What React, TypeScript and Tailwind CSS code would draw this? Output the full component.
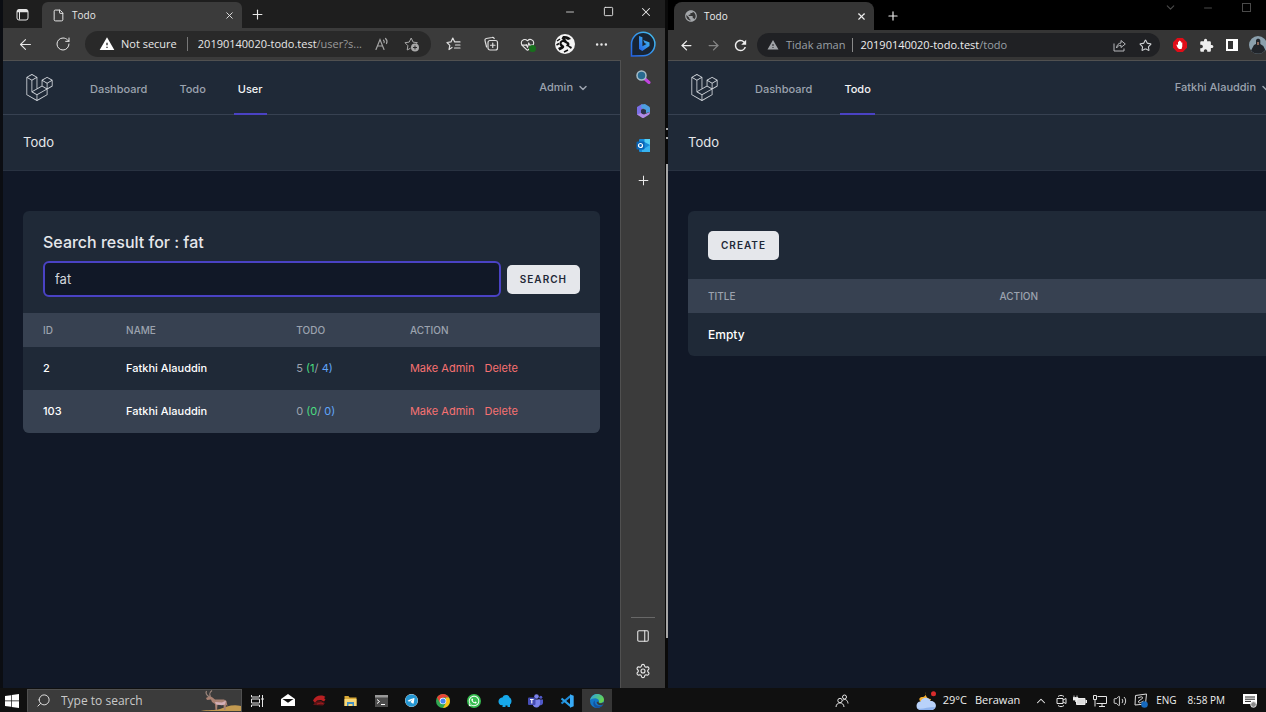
import type { ReactNode } from "react";
import {
  ArrowLeft,
  ArrowRight,
  ChevronDown,
  ChevronUp,
  File,
  HeartPulse,
  Minus,
  MoreHorizontal,
  PanelRight,
  Plus,
  RotateCw,
  Search,
  Settings,
  Square,
  Star,
  Volume2,
  X,
} from "lucide-react";
import { SiLaravel } from "react-icons/si";
import { FaTelegram, FaWhatsapp } from "react-icons/fa6";
import { MdExtension, MdPublic, MdRefresh, MdWarning } from "react-icons/md";

const uiFont = "font-['Open_Sans','Noto_Sans',sans-serif]";
const pageFont = "font-[Inter,'Liberation_Sans',sans-serif]";

function IconButton({ label, className = "", children }: { label: string; className?: string; children: ReactNode }) {
  return (
    <button type="button" aria-label={label} className={`flex shrink-0 items-center justify-center ${className}`}>
      {children}
    </button>
  );
}

/* ---------- Drawings ---------- */

function TabActionsIcon() {
  return (
    <svg width="13" height="13" viewBox="0 0 13 13" fill="none" stroke="#e5e5e5">
      <rect x="1" y="1.5" width="11" height="10.5" rx="2" />
      <path d="M1 3.5h11M1.5 2.5h10" strokeWidth="1.6" />
      <path d="M3.5 4v7.5" />
    </svg>
  );
}

function ReadAloudIcon() {
  return (
    <svg width="14" height="14" viewBox="0 0 14 14" fill="none" stroke="#a5a5a5" strokeLinecap="round" strokeWidth="1.2">
      <path d="M1 12.5 5 2.5l4 10M2.4 9h5.2M8.5 3.2c.8.7.9 1.6.6 2.4M10.5 1.5c1.6 1.400 1.900 3.200 1 5" />
    </svg>
  );
}

function StarAddIcon() {
  return (
    <svg width="16" height="16" viewBox="0 0 16 16" fill="none" stroke="#a8a8a8" strokeLinejoin="round">
      <path d="M6.500 12.200 3.200 14l.7-4.300L1 6.700l4.200-.6L7.200 2l1.900 4.100 4.300.6-1 1" />
      <circle cx="11" cy="11.500" r="4" fill="#a8a8a8" stroke="none" />
      <path d="M9 11.500h4M11 9.500v4" stroke="#2b2b2b" />
    </svg>
  );
}

function FavoritesIcon() {
  return (
    <svg width="16" height="16" viewBox="0 0 16 16" fill="none" stroke="#dedede" strokeLinejoin="round" strokeLinecap="round" strokeWidth="1.2">
      <path d="M6 11.500 3 13.500l.8-4.200L1 6.500l4-.6L6.800 2l1.900 3.900H14M9.500 9H14M8.500 12H14" />
    </svg>
  );
}

function CollectionsIcon() {
  return (
    <svg width="16" height="16" viewBox="0 0 16 16" fill="none" stroke="#dedede" strokeLinejoin="round" strokeLinecap="round" strokeWidth="1.2">
      <rect x="5" y="4.500" width="9.500" height="9.500" rx="2" />
      <path d="M9.750 7v4.500M7.500 9.250H12M3.600 11 2 4.600C1.700 3.500 2.200 2.800 3.200 2.500L9 1.500c1-.2 1.800.2 2.200 1" />
    </svg>
  );
}

function DragonAvatar() {
  return (
    <svg width="20" height="20" viewBox="0 0 20 20">
      <circle cx="10" cy="10" r="10" fill="#f4f4f4" />
      <path d="M8 2c4-.5 7 1 8 3l-3 1-3-1.500 2 3c2.500 1 3 2.500 2 4l3 1.500-1 2-3-2.500-2-.5 1-2-3.500-2C6 8 6 10 8 11s1.500 3-.5 4l-3 1.500L3 14l3-1.500C3.500 10.500 4 6.500 8 6L6.500 4.500z" fill="#111" />
      <path d="m2 7 3-2M1.500 11 4 9.500M9 18l4-2" stroke="#111" strokeWidth="1.500" />
    </svg>
  );
}

function BingIcon() {
  return (
    <svg width="26" height="26" viewBox="0 0 26 26">
      <defs>
        <linearGradient id="bing" x1="0" y1="1" x2="1" y2="0">
          <stop offset="0" stopColor="#2262e8" />
          <stop offset="1" stopColor="#47c4f0" />
        </linearGradient>
      </defs>
      <path d="M1.500 25V13a11.700 11.700 0 1 1 11.700 11.700z" fill="#182433" stroke="url(#bing)" strokeWidth="1.500" />
      <path d="m9 5 3.400 1.300v9l4.100-2.300-2-1-1.300-3.100 6.300 2.700v3.500l-7.200 5L9 18z" fill="url(#bing)" />
    </svg>
  );
}

function SidebarSearchIcon() {
  return (
    <svg width="16" height="16" viewBox="0 0 16 16">
      <path d="m10 10 4 3.500" stroke="#c143df" strokeWidth="3" strokeLinecap="round" />
      <circle cx="6.500" cy="6.500" r="4.500" fill="#286a91" stroke="#a7bdc9" strokeWidth="1.500" />
    </svg>
  );
}

function Microsoft365Icon() {
  return (
    <svg width="16" height="16" viewBox="0 0 16 16">
      <path d="M7 1 2 4v6.500c0 1.500 1 2 2 1.500l2-1V7l4-2.500z" fill="#7a6fe6" />
      <path d="M6.500 1.500 10 1l4 2.500c.6.400 1 1 1 1.800V9l-4 1V7L6 4.500z" fill="#4d9fe0" />
      <path d="m2 11.500 5 3.200c.7.400 1.300.4 2 0L13.500 12c1-.6 1.500-1.500 1.500-3L9 11.500 6 10z" fill="#b18ae5" />
      <path d="m6.500 6.500 4 1v2.300l-2.500 1.500L6.500 10z" fill="#2b3050" />
    </svg>
  );
}

function OutlookIcon() {
  return (
    <svg width="15" height="15" viewBox="0 0 15 15">
      <rect x="3" y="1" width="11" height="13" rx="1" fill="#1689d8" />
      <path d="M8.500 1H14v6L8.500 4z" fill="#54d0f5" />
      <path d="m14 7-8 5v2h8z" fill="#37b3f0" />
      <rect x="0.500" y="3.500" width="8" height="8" rx="1" fill="#0864b5" />
      <circle cx="4.500" cy="7.500" r="2" fill="none" stroke="#fff" strokeWidth="1.200" />
    </svg>
  );
}

function ShareIcon() {
  return (
    <svg width="13" height="13" viewBox="0 0 13 13" fill="none" stroke="#b5b7ba" strokeLinejoin="round">
      <path d="M1 4.500V12h10V9.500M3.500 9c.3-3 2-4.800 4.500-5V1.500L12.300 5 8 8.500V6.300C6 6.400 4.600 7.200 3.500 9z" />
    </svg>
  );
}

function AdblockIcon() {
  return (
    <svg width="14" height="14" viewBox="0 0 14 14">
      <path d="M4.200 0h5.600L14 4.200v5.600L9.800 14H4.200L0 9.800V4.200z" fill="#e00d18" />
      <path d="M4.500 9.500 3.300 6.700l1-.3.700.8V3.800h1v2.500V2.700h1.100v3.500V3.200h1v3.200V4.500h1.200v4L8.500 11H6z" fill="#fff" />
    </svg>
  );
}

function SidePanelIcon() {
  return (
    <svg width="12" height="12" viewBox="0 0 12 12">
      <path d="M0 0h12v12H0zM2 2v8h5V2z" fill="#fff" fillRule="evenodd" />
    </svg>
  );
}

function PhotoAvatar() {
  return (
    <svg width="18" height="18" viewBox="0 0 18 18">
      <circle cx="9" cy="9" r="9" fill="#8ba0ad" />
      <path d="M2 14.500 5 9l2-1V4.500C7.300 2 11 2 11.300 4.500V8l3 2 2 4A9 9 0 0 1 2 14.500z" fill="#20242a" />
      <path d="M8 6h2v3H8z" fill="#8b6a5e" />
    </svg>
  );
}

/* ---------- Taskbar drawings ---------- */

function WindowsIcon() {
  return (
    <svg width="14" height="14" viewBox="0 0 14 14" fill="#fff">
      <path d="M0 2 6 1.200v5.400H0zM6.700 1.100 14 0v6.600H6.700zM0 7.300h6v5.500L0 12zM6.700 7.300H14V14l-7.300-1.100z" />
    </svg>
  );
}

function AntelopeArt() {
  return (
    <svg width="44" height="22" viewBox="0 0 44 22">
      <path d="M0 22c9-3 17-1 23-3s12-5 21-3v6z" fill="#c39a50" />
      <path d="m9 8 4-2 2.500 1.500L18 9.500h9l2.500 1.500 1 5-1.500-1-.5 5H27l-.5-5-6-.5-.5 5.500h-1.500l-.5-6-3-2-1-2.500-4 .5z" fill="#a98172" />
      <path d="m18 12 7 .5 4-2-1 4-3 .8-6-.8z" fill="#d3b0b8" />
      <path d="M12.500 7C9 5 8.500 3 9.500 1M13.500 6.500C12 4.500 13 2 15 .5" fill="none" stroke="#9b857b" strokeWidth="1.200" />
    </svg>
  );
}

function TaskViewIcon() {
  return (
    <svg width="15" height="14" viewBox="0 0 15 14" fill="none" stroke="#e5e5e5">
      <path d="M1.500 1v2h8V1M1.500 13v-2h8v2M1.500 5h8v4h-8zM12.500 1v12M11 5h3" />
    </svg>
  );
}

function MailIcon() {
  return (
    <svg width="14" height="13" viewBox="0 0 14 13">
      <path d="M0 5 7 0l7 5v7H0z" fill="#fff" />
      <path d="m1.500 5 5.500 3.800L12.500 5z" fill="#111" />
    </svg>
  );
}

function RedGameIcon() {
  return (
    <svg width="15" height="13" viewBox="0 0 15 13">
      <path d="M1 6.500C3 2 9 0 13.500 3L12 4l1.500 1.500-1.500 2-3-1.500-4 .5-2 2.500z" fill="#b92022" />
      <path d="m1 11 3-3.500 5-.5 4 2-2 2.500z" fill="#611316" />
      <path d="m5 10 4-1 2.500 1" fill="none" stroke="#a51c1e" />
    </svg>
  );
}

function FolderIcon() {
  return (
    <svg width="13" height="12" viewBox="0 0 13 12">
      <path d="M.5 1h4l1 1.500h7V11h-12z" fill="#d9a936" />
      <path d="M.5 4h12v7H.5z" fill="#f7d777" />
      <path d="M3 7h7v4H8.500V9h-4v2H3z" fill="#438fc4" />
    </svg>
  );
}

function TerminalIcon() {
  return (
    <svg width="13" height="12" viewBox="0 0 13 12">
      <path d="M0 0h13v12H0z" fill="#4b4b4b" />
      <path d="M0 0h13v2.500H0z" fill="#999" />
      <path d="m2 4.500 2.500 2L2 8.500M6 9.500h4" fill="none" stroke="#fff" />
    </svg>
  );
}

function ChromeIcon() {
  return (
    <svg width="14" height="14" viewBox="0 0 14 14">
      <circle cx="7" cy="7" r="7" fill="#30a852" />
      <path d="M1 3.500A7 7 0 0 1 13 3.500H7L4 8.700z" fill="#e94335" />
      <path d="M13 3.500A7 7 0 0 1 7 14l3-5.200V3.500z" fill="#fbc116" />
      <circle cx="7" cy="7" r="3.300" fill="#fff" />
      <circle cx="7" cy="7" r="2.600" fill="#4285f4" />
    </svg>
  );
}

function ElephantIcon() {
  return (
    <svg width="14" height="14" viewBox="0 0 14 14">
      <path d="M.5 8C.5 4.500 3 3.500 4.500 3.500 5 1.500 7 .8 8.500 1c2 .2 2.800 1.500 3 2.500C13.500 4.500 14 7 13 9.500l-1 1V13H9.500v-1.500h-2V13H4.500v-2C2.500 11.500.8 10.500.5 8z" fill="#17a8ea" />
    </svg>
  );
}

function TeamsIcon() {
  return (
    <svg width="15" height="14" viewBox="0 0 15 14">
      <circle cx="8.500" cy="2.500" r="2.300" fill="#7b83eb" />
      <circle cx="12.800" cy="3.300" r="1.500" fill="#5059c9" />
      <path d="M10 5.500h5V9a2.700 2.700 0 0 1-4 2z" fill="#5059c9" />
      <path d="M5 5.500h7V10a3.700 3.700 0 0 1-7 1.500z" fill="#7b83eb" />
      <rect y="3.500" width="7.500" height="7.500" rx="1" fill="#454db5" />
      <path d="M2 5.500h3.600M3.800 5.500v4" stroke="#fff" strokeWidth="1.100" />
    </svg>
  );
}

function VsCodeIcon() {
  return (
    <svg width="14" height="14" viewBox="0 0 14 14" fill="none">
      <path d="M10.500 2.200 1.500 9.500" stroke="#1e8ad6" strokeWidth="2.200" />
      <path d="m1.500 4.500 9 7.300" stroke="#2b9fe8" strokeWidth="2.200" />
      <path d="m10 .3 3.700 1.500v10.400L10 13.700z" fill="#37aaf5" />
    </svg>
  );
}

function EdgeIcon() {
  return (
    <svg width="14" height="14" viewBox="0 0 14 14">
      <defs>
        <linearGradient id="edge-top" x1="0" y1="0" x2="1" y2="0.500">
          <stop offset="0" stopColor="#2b9fe8" />
          <stop offset="1" stopColor="#66d64f" />
        </linearGradient>
      </defs>
      <circle cx="7" cy="7" r="7" fill="#1377c8" />
      <path d="M0 6.500C.8 2.500 3.700 0 7.200 0 11 0 14 2.600 14 5.800 14 8 12.200 9 10.500 9 9 9 8.400 8.400 8.900 7.600 9.500 6 8 4.500 5.500 4.300 3 4.200 1 5 0 6.500z" fill="url(#edge-top)" />
      <path d="M5 6.500C4 9 6 12 9.500 12c1.500 0 2.700-.6 3.500-1.500-1 2.300-3.400 3.500-6 3.500-2.500-.8-4-3-3.700-5C3.500 7.700 4 7 5 6.500z" fill="#1551a0" />
      <path d="M8.900 7.500C8 8.500 9 9.500 11 9.300c1.200-.1 2-.6 2.500-1l.5 1-1 1.200C10.500 12 6.500 11 6.700 8z" fill="#3a3a3a" />
    </svg>
  );
}

function PeopleIcon() {
  return (
    <svg width="14" height="14" viewBox="0 0 14 14" fill="none" stroke="#e5e5e5">
      <circle cx="5" cy="6.500" r="2.200" />
      <circle cx="9.500" cy="3" r="2" />
      <path d="M1 13c.3-5.500 7.700-5.500 8 0M7.500 6.500c2.500-2.300 5.200-.5 5.500 3" />
    </svg>
  );
}

function WeatherIcon() {
  return (
    <svg width="22" height="20" viewBox="0 0 22 20">
      <path d="M11 1c-1 2 0 7 5 7-1 4-8 6-11 2C3 7 6 6 7 6c3 0 4-2 4-5z" fill="#f6ae2d" />
      <path d="M5 19a4.300 4.300 0 0 1 .5-8.500C7 5.500 14 5.500 15.500 10c6-.5 7.500 7.500 2 9z" fill="#b9d2fa" />
      <path d="M2 17c4 2 10-1 18-1-1 2-2 3-3 3H5z" fill="#8eb3ee" />
      <circle cx="18.500" cy="2.800" r="2.500" fill="#d92c2c" />
    </svg>
  );
}

function MeetNowIcon() {
  return (
    <svg width="11" height="14" viewBox="0 0 11 14" fill="none" stroke="#e5e5e5">
      <path d="M2 2.500c2-1.500 4-1.500 6 0M2 11.500c2 1.500 4 1.500 6 0M1 4.500h6v5H1zM7 6l3-1.500v5L7 8" />
    </svg>
  );
}

function BatteryIcon() {
  return (
    <svg width="14" height="11" viewBox="0 0 14 11">
      <path d="M3.500 3.500h8.500v6H3.500z" fill="#ddd" stroke="#eee" />
      <path d="M12.500 5H14v3h-1.500z" fill="#eee" />
      <path d="M1 .5v2M4 .5v2M0 2.500h5v2.500H0zM2.500 5v2" fill="#eee" stroke="#eee" strokeWidth="0.800" />
    </svg>
  );
}

function NetworkIcon() {
  return (
    <svg width="14" height="12" viewBox="0 0 14 12" fill="none" stroke="#e5e5e5">
      <path d="M4.500 1.500h9v7H3.500M6 11.500h6M9 8.500v3M.5.5h3v4h-3zM2 4.500v7" />
    </svg>
  );
}

function PenIcon() {
  return (
    <svg width="15" height="15" viewBox="0 0 15 15">
      <path d="M2.500 2.500 13.500 1l-1 10-10.500 1z" fill="none" stroke="#ddd" />
      <path d="M5 5c2-1 5-2 4.500 0S5 7 5.500 9s3 0 5-1" fill="none" stroke="#ddd" />
      <circle cx="11.500" cy="11.500" r="3.300" fill="#1669bd" />
    </svg>
  );
}

function NotificationsIcon() {
  return (
    <svg width="14" height="14" viewBox="0 0 14 14">
      <path d="M0 0h14v10h-3.500L8 13.500V10H0z" fill="#fff" />
      <path d="M2 3h10M2 5.200h10M2 7.400h6" stroke="#222" />
      <circle cx="10.500" cy="10.500" r="2.800" fill="#888" stroke="#ddd" />
    </svg>
  );
}

/* ---------- Todo app pages ---------- */

function PageNav({ links, active, user }: { links: string[]; active: string; user: string }) {
  return (
    <>
      <nav className="flex h-[54px] shrink-0 items-stretch border-b border-[#374151] bg-[#1f2937] pr-[31px] pl-[23px]">
        <a href="#home" aria-label="Home" className="flex items-center text-[27px] text-[#d1d5db]">
          <SiLaravel />
        </a>
        <div className="-mb-px ml-[33px] flex gap-6">
          {links.map((link) => (
            <a
              key={link}
              href={`#${link.toLowerCase()}`}
              className={
                link === active
                  ? "flex items-center border-b-2 border-[#4a42c4] px-1 pt-1 text-[11px] font-medium text-[#f3f4f6]"
                  : "flex items-center border-b-2 border-transparent px-1 pt-1 text-[11px] font-medium text-[#9ca3af]"
              }
            >
              {link}
            </a>
          ))}
        </div>
        <button type="button" className="ml-auto flex items-center gap-1 text-[11px] font-medium whitespace-nowrap text-[#9ca3af]">
          {user}
          <ChevronDown size={12} strokeWidth={3} />
        </button>
      </nav>
      <header className="flex h-14 shrink-0 items-center border-b border-[#293241] bg-[#1f2937] px-5 pt-px">
        <h1 className="text-[13px] text-[#e5e7eb]">Todo</h1>
      </header>
    </>
  );
}

const headCell = "px-5 text-left text-[10px] font-medium text-[#9ca3af] uppercase";
const lightButton = "h-[29px] shrink-0 rounded-[5px] bg-[#e5e7eb] px-[13px] text-[10px] font-semibold tracking-widest text-[#1f2937] uppercase";

const users = [
  { id: 2, name: "Fatkhi Alauddin", total: 5, done: 1, open: 4 },
  { id: 103, name: "Fatkhi Alauddin", total: 0, done: 0, open: 0 },
];

function UserPage() {
  return (
    <div className={`flex min-w-0 flex-1 flex-col bg-[#111827] ${pageFont}`}>
      <PageNav links={["Dashboard", "Todo", "User"]} active="User" user="Admin" />
      <main className="px-5 pt-10">
        <section className="overflow-hidden rounded-md bg-[#1f2937]">
          <form className="px-5 pt-5 pb-4" onSubmit={(event) => event.preventDefault()}>
            <h2 className="mb-2 text-[16px] leading-[22px] font-medium text-[#e5e7eb]">Search result for : fat</h2>
            <div className="flex items-center gap-1.5">
              <input
                type="text"
                aria-label="Search users"
                defaultValue="fat"
                className="h-9 min-w-0 flex-1 rounded-md border-2 border-[#4a42c4] bg-[#111827] px-2.5 text-[13px] text-[#d1d5db] outline-none"
              />
              <button type="submit" className={lightButton}>
                Search
              </button>
            </div>
          </form>
          <table className="w-full table-fixed">
            <colgroup>
              <col className="w-[14.400%]" />
              <col className="w-[29.500%]" />
              <col className="w-[19.700%]" />
              <col />
            </colgroup>
            <thead>
              <tr className="h-[34px] bg-[#374151]">
                <th className={headCell}>Id</th>
                <th className={headCell}>Name</th>
                <th className={headCell}>Todo</th>
                <th className={headCell}>Action</th>
              </tr>
            </thead>
            <tbody className="text-[11px]">
              {users.map((user) => (
                <tr key={user.id} className="h-[43px] even:bg-[#374151]">
                  <td className="px-5 font-medium text-white">{user.id}</td>
                  <td className="px-5 font-medium whitespace-nowrap text-white">{user.name}</td>
                  <td className="px-5 whitespace-nowrap text-[#9ca3af]">
                    {user.total} <span className="text-[#4ade80]">({user.done}</span>/{" "}
                    <span className="text-[#60a5fa]">{user.open})</span>
                  </td>
                  <td className="px-5">
                    <div className="flex gap-2.5 whitespace-nowrap text-[#f87171]">
                      <button type="button">Make Admin</button>
                      <button type="button">Delete</button>
                    </div>
                  </td>
                </tr>
              ))}
            </tbody>
          </table>
        </section>
      </main>
    </div>
  );
}

function TodoPage() {
  return (
    <div className={`flex flex-1 flex-col bg-[#111827] ${pageFont}`}>
      <PageNav links={["Dashboard", "Todo"]} active="Todo" user="Fatkhi Alauddin" />
      <main className="px-5 pt-10">
        <section className="overflow-hidden rounded-md bg-[#1f2937]">
          <div className="flex px-5 pt-5 pb-[19px]">
            <button type="button" className={lightButton}>
              Create
            </button>
          </div>
          <table className="w-full table-fixed">
            <thead>
              <tr className="h-[34px] bg-[#374151]">
                <th className={`w-[49%] ${headCell}`}>Title</th>
                <th className={headCell}>Action</th>
              </tr>
            </thead>
            <tbody>
              <tr className="h-[43px]">
                <td colSpan={2} className="px-5 text-[12px] font-medium text-white">
                  Empty
                </td>
              </tr>
            </tbody>
          </table>
        </section>
      </main>
    </div>
  );
}

/* ---------- Browser windows ---------- */

function EdgeWindow() {
  return (
    <div className="flex min-w-0 flex-col bg-[#3b3b3b] text-[#e8e8e8]">
      <div className="flex h-7 shrink-0 items-end bg-[#1e1e1e]">
        <IconButton label="Tab actions" className="h-7 w-[39px]">
          <TabActionsIcon />
        </IconButton>
        <div className="flex h-[26px] w-[200px] items-center rounded-t-md bg-[#3b3b3b] pl-2.5">
          <File size={13} strokeWidth={1.8} />
          <span className="ml-[7px] flex-1 text-[10px]">Todo</span>
          <IconButton label="Close tab" className="h-5 w-[26px]">
            <X size={11} />
          </IconButton>
        </div>
        <IconButton label="New tab" className="h-7 w-[30px]">
          <Plus size={15} strokeWidth={1.8} />
        </IconButton>
        <div className="ml-auto flex h-7 items-start">
          <IconButton label="Minimize" className="h-[23px] w-[38px]">
            <Minus size={12} strokeWidth={1.6} />
          </IconButton>
          <IconButton label="Maximize" className="h-[23px] w-[38px]">
            <Square size={11} strokeWidth={2} />
          </IconButton>
          <IconButton label="Close" className="h-[23px] w-[38px]">
            <X size={14} strokeWidth={1.8} />
          </IconButton>
        </div>
      </div>
      <div className="flex h-8 shrink-0 items-center pl-1">
        <IconButton label="Back" className="h-8 w-[37px]">
          <ArrowLeft size={17} strokeWidth={1.5} />
        </IconButton>
        <IconButton label="Refresh" className="h-8 w-[37px]">
          <RotateCw size={16} strokeWidth={1.5} />
        </IconButton>
        <div className="mx-1 flex h-[26px] min-w-0 flex-1 items-center rounded-full bg-[#292929] pr-1 pl-3.5 text-[11px] whitespace-nowrap">
          <MdWarning size={16} className="shrink-0 text-white" />
          <span className="ml-1.5">Not secure</span>
          <span className="mx-2.5 h-3.5 w-px shrink-0 bg-[#777]" />
          <span className="min-w-0 flex-1 truncate">
            20190140020-todo.test<span className="text-[#9a9a9a]">/user?s...</span>
          </span>
          <IconButton label="Read aloud" className="w-[30px]">
            <ReadAloudIcon />
          </IconButton>
          <IconButton label="Add to favorites" className="w-[30px]">
            <StarAddIcon />
          </IconButton>
        </div>
        <IconButton label="Favorites" className="w-[37px]">
          <FavoritesIcon />
        </IconButton>
        <IconButton label="Collections" className="w-[37px]">
          <CollectionsIcon />
        </IconButton>
        <IconButton label="Browser essentials" className="relative w-[37px]">
          <HeartPulse size={15} strokeWidth={1.8} />
          <span className="absolute right-[10px] bottom-0 size-[7px] rounded-full bg-[#17701c]" />
        </IconButton>
        <IconButton label="Profile" className="w-[37px]">
          <DragonAvatar />
        </IconButton>
        <IconButton label="Settings and more" className="w-[37px]">
          <MoreHorizontal size={15} />
        </IconButton>
        <IconButton label="Bing" className="w-[45px]">
          <BingIcon />
        </IconButton>
      </div>
      <div className="flex flex-1">
        <div className="flex min-w-0 flex-1 border-t border-r border-[#505050]">
          <UserPage />
        </div>
        <aside className="flex w-11 flex-col items-center">
          <IconButton label="Search" className="h-[34px] w-full">
            <SidebarSearchIcon />
          </IconButton>
          <IconButton label="Microsoft 365" className="h-[34px] w-full">
            <Microsoft365Icon />
          </IconButton>
          <IconButton label="Outlook" className="h-[34px] w-full">
            <OutlookIcon />
          </IconButton>
          <IconButton label="Customize" className="h-9 w-full">
            <Plus size={15} strokeWidth={1.6} />
          </IconButton>
          <div className="mt-auto h-px w-6 bg-[#686868]" />
          <IconButton label="Hide sidebar" className="h-9 w-full">
            <PanelRight size={14} strokeWidth={1.8} />
          </IconButton>
          <IconButton label="Sidebar settings" className="h-[34px] w-full">
            <Settings size={16} strokeWidth={1.7} />
          </IconButton>
        </aside>
      </div>
    </div>
  );
}

function ChromeWindow() {
  return (
    <div className="flex min-w-0 overflow-hidden">
      <div className="flex w-[calc(100%+37px)] shrink-0 flex-col bg-[#353535] text-[#eeeeee]">
        <div className="flex h-[30px] shrink-0 items-end bg-black pl-1.5">
          <div className="flex h-7 w-[200px] items-center rounded-t-lg bg-[#353535] pl-2.5">
            <MdPublic size={14} className="text-[#a4a7aa]" />
            <span className="ml-1.5 flex-1 text-[10px]">Todo</span>
            <IconButton label="Close tab" className="h-5 w-[26px]">
              <X size={11} strokeWidth={2.5} />
            </IconButton>
          </div>
          <IconButton label="New tab" className="h-7 w-[38px]">
            <Plus size={14} />
          </IconButton>
          <div className="ml-auto flex h-[30px] items-start text-[#4a4a4a]">
            <IconButton label="Search tabs" className="h-[15px] w-[38px]">
              <ChevronDown size={13} />
            </IconButton>
            <IconButton label="Minimize" className="h-[15px] w-[38px]">
              <Minus size={12} />
            </IconButton>
            <IconButton label="Maximize" className="h-[15px] w-[38px]">
              <span className="size-[9px] border border-current" />
            </IconButton>
            <IconButton label="Close" className="h-[15px] w-[38px]">
              <X size={12} />
            </IconButton>
          </div>
        </div>
        <div className="flex h-[30px] shrink-0 items-center pl-[5px]">
          <IconButton label="Back" className="w-[27px]">
            <ArrowLeft size={15} />
          </IconButton>
          <IconButton label="Forward" className="w-[27px] text-[#858585]">
            <ArrowRight size={15} />
          </IconButton>
          <IconButton label="Reload" className="w-[27px]">
            <MdRefresh size={17} />
          </IconButton>
          <div className="mr-[7px] ml-[3px] flex h-6 min-w-0 flex-1 items-center rounded-full bg-[#202124] pr-0.5 pl-2.5 text-[11px] whitespace-nowrap">
            <MdWarning size={12} className="shrink-0 text-[#a0a3a7]" />
            <span className="ml-[7px] text-[#9aa0a6]">Tidak aman</span>
            <span className="mx-[7px] h-3.5 w-px shrink-0 bg-[#8a8a8a]" />
            <span className="min-w-0 flex-1 truncate">
              20190140020-todo.test<span className="text-[#9aa0a6]">/todo</span>
            </span>
            <IconButton label="Share" className="w-[26px]">
              <ShareIcon />
            </IconButton>
            <IconButton label="Bookmark" className="w-[26px]">
              <Star size={13} className="text-[#d0d2d5]" />
            </IconButton>
          </div>
          <IconButton label="Ad blocker" className="w-[26px]">
            <AdblockIcon />
          </IconButton>
          <IconButton label="Extensions" className="w-[26px]">
            <MdExtension size={15} />
          </IconButton>
          <IconButton label="Side panel" className="w-[26px]">
            <SidePanelIcon />
          </IconButton>
          <IconButton label="Profile" className="w-[26px]">
            <PhotoAvatar />
          </IconButton>
          <div className="w-8 shrink-0" />
        </div>
        <div className="flex flex-1 border-t border-[#505050]">
          <TodoPage />
        </div>
      </div>
    </div>
  );
}

const apps: { name: string; icon: ReactNode }[] = [
  { name: "Task view", icon: <TaskViewIcon /> },
  { name: "Mail", icon: <MailIcon /> },
  { name: "Game", icon: <RedGameIcon /> },
  { name: "File Explorer", icon: <FolderIcon /> },
  { name: "Terminal", icon: <TerminalIcon /> },
  { name: "Telegram", icon: <FaTelegram size={13} className="rounded-full bg-white text-[#2497d3]" /> },
  { name: "Chrome", icon: <ChromeIcon /> },
  {
    name: "WhatsApp",
    icon: (
      <span className="flex size-3.5 items-center justify-center rounded-full bg-[#36bd50] text-white">
        <FaWhatsapp size={12} />
      </span>
    ),
  },
  { name: "Laragon", icon: <ElephantIcon /> },
  { name: "Teams", icon: <TeamsIcon /> },
  { name: "Visual Studio Code", icon: <VsCodeIcon /> },
];

function Taskbar() {
  return (
    <footer className="flex h-6 shrink-0 items-stretch bg-[#101010] pt-px text-[#eeeeee]">
      <IconButton label="Start" className="w-[27px] pr-[3px]">
        <WindowsIcon />
      </IconButton>
      <label className="flex w-[215px] items-center overflow-hidden border border-[#505050] border-b-transparent bg-[#3b3b3b] pl-2">
        <Search size={15} strokeWidth={1.6} className="shrink-0 -scale-x-100 text-[#dddddd]" />
        <input
          type="text"
          placeholder="Type to search"
          className="ml-2.5 min-w-0 flex-1 bg-transparent text-[12px] placeholder:text-[#c9c9c9] outline-none"
        />
        <AntelopeArt />
      </label>
      <div className="flex w-[340px]">
        {apps.map((app) => (
          <IconButton key={app.name} label={app.name} className="flex-1">
            {app.icon}
          </IconButton>
        ))}
      </div>
      <IconButton label="Edge" className="w-[30px] bg-[#363636]">
        <EdgeIcon />
      </IconButton>
      <div className="ml-auto flex items-center whitespace-nowrap">
        <IconButton label="People" className="mr-[66px]">
          <PeopleIcon />
        </IconButton>
        <button type="button" className="flex items-center text-[11px]">
          <WeatherIcon />
          <span className="ml-1.5">29°C</span>
          <span className="ml-2">Berawan</span>
        </button>
        <div className="ml-3.5 flex items-center gap-1.5">
          <IconButton label="Show hidden icons" className="mr-0.5">
            <ChevronUp size={14} strokeWidth={1.8} />
          </IconButton>
          <MeetNowIcon />
          <BatteryIcon />
          <NetworkIcon />
          <Volume2 size={14} strokeWidth={1.5} />
          <PenIcon />
        </div>
        <span className="ml-2 text-[10px]">ENG</span>
        <span className="ml-[11px] text-[10px]">8:58 PM</span>
        <IconButton label="Notifications" className="mr-[9px] ml-[18px]">
          <NotificationsIcon />
        </IconButton>
      </div>
    </footer>
  );
}

export default function App() {
  return (
    <div className={`flex min-h-screen flex-col bg-[#0c0e13] ${uiFont}`}>
      <div className="grid flex-1 grid-cols-[3px_minmax(0,662fr)_3px_minmax(0,598fr)]">
        <div className="bg-[#0b0d12]" />
        <EdgeWindow />
        <div className="flex flex-col items-end bg-[#0a0a0a] pt-32">
          <div className="h-0.5 w-0.5 bg-[#aaaaaa]" />
          <div className="mt-[7px] h-0.5 w-0.5 bg-[#aaaaaa]" />
          <div className="mt-[25px] mb-[50px] w-0.5 flex-1 bg-[#a6a6a6]" />
        </div>
        <ChromeWindow />
      </div>
      <Taskbar />
    </div>
  );
}
